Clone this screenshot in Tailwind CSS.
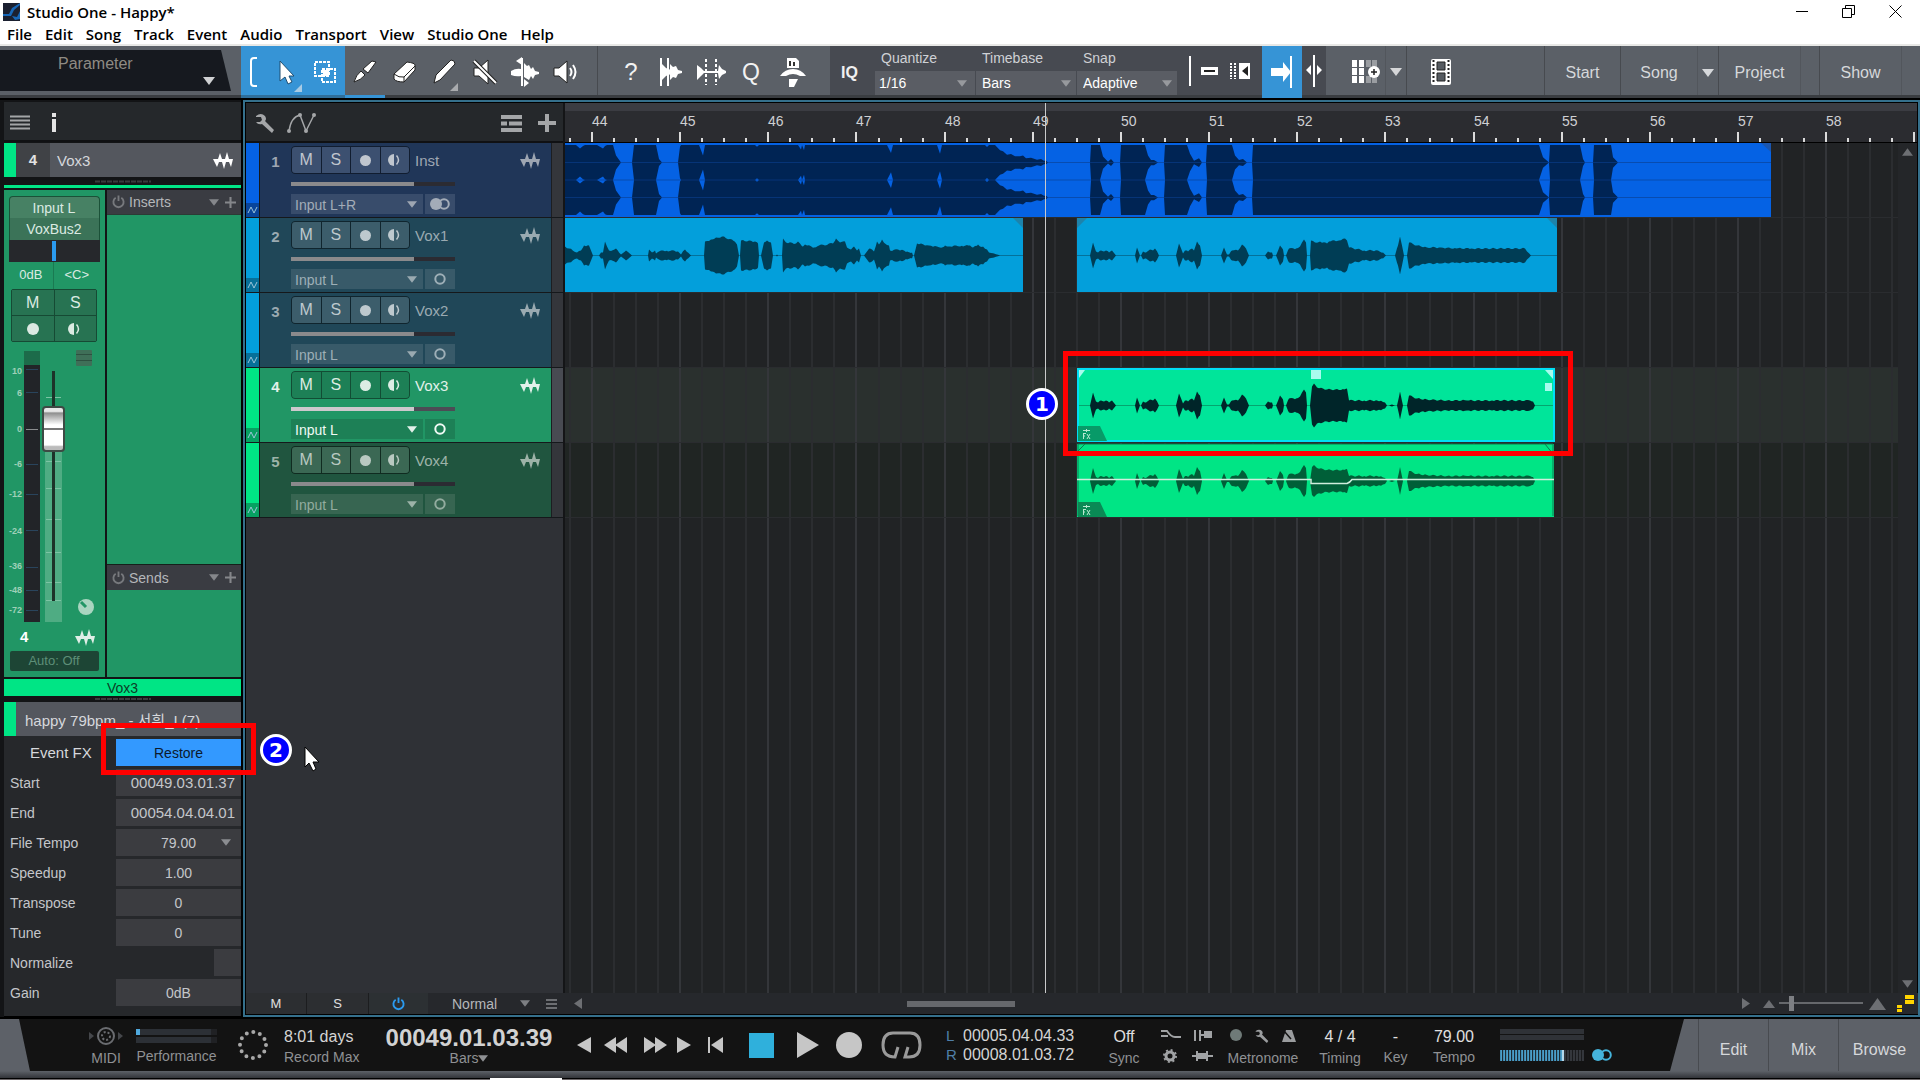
<!DOCTYPE html>
<html lang="en">
<head>
    <meta charset="UTF-8">
    <meta name="viewport" content="width=device-width, initial-scale=1.0">
    <title>Studio One - Happy*</title>
    <script src="https://cdn.jsdelivr.net/npm/@tailwindcss/browser@4"></script>
</head>
<body class="flex flex-col min-h-screen bg-black font-['Liberation_Sans','Noto_Sans_CJK_KR',sans-serif] text-[14px] leading-[18px] text-[#c4c6ca] overflow-x-hidden">

    <!-- shared icons -->
    <svg class="hidden">
      <symbol id="wave" viewBox="0 0 20 17"><path d="M0 7h5l2-6 2 6h3l2-7 2 7h4l-2 8-2-5h-3l-2 7-2-7h-3l-2 5z" fill="currentColor"/></symbol>
      <symbol id="down" viewBox="0 0 12 8"><path d="M0 0h12l-6 8z" fill="currentColor"/></symbol>
      <symbol id="monitor" viewBox="0 0 14 12"><path d="M6 0v12a6 6 0 0 1 0-12z" fill="currentColor"/><path d="M8.500 1.500q4 4.500 0 9" fill="none" stroke="currentColor" stroke-width="1.500"/></symbol>
      <symbol id="power" viewBox="0 0 14 14"><path d="M4 2.500a5.500 5.500 0 1 0 6 0M7 0v6" fill="none" stroke="currentColor" stroke-width="2"/></symbol>
      <symbol id="plus" viewBox="0 0 16 16"><path d="M6.500 0h3v6.500h6.500v3h-6.500v6.500h-3v-6.500h-6.500v-3h6.500z" fill="currentColor"/></symbol>
      <symbol id="wrench" viewBox="0 0 20 20"><path d="M1 3q5-4 9 0 2 3 0 5l9 9-2 3-10-9q-4 1-6-2l4 0 2-2-1-3-5 0z" fill="currentColor"/></symbol>
      <symbol id="stereo" viewBox="0 0 20 12"><circle cx="6" cy="6" r="6" fill="currentColor"/><circle cx="14" cy="6" r="4.800" fill="none" stroke="currentColor" stroke-width="2"/></symbol>
      <symbol id="mono" viewBox="0 0 12 12"><circle cx="6" cy="6" r="4.700" fill="none" stroke="currentColor" stroke-width="2"/></symbol>
    </svg>

    <!-- title bar -->
    <header class="bg-white text-black font-['Open_Sans','Noto_Sans',sans-serif] text-[15px] font-semibold h-[46px] border-b-2 border-[#e8e8e6]">
      <div class="flex items-center h-[23px] pl-[3px]">
        <svg class="w-[17px] h-[18px] mr-[7px]" viewBox="0 0 17 18"><rect width="17" height="18" fill="#1b2030"/><path d="M0 11h6l3-6 8-5v2l-6 5-3 6-8 0zM9 13l5 1 3-6v8l-5 1z" fill="#1767b8"/></svg>
        <h1 class="flex-1">Studio One - Happy*</h1>
        <button class="px-[17px]" aria-label="Minimize"><svg width="12" height="12" stroke="#000"><path d="M0 5.500h12"/></svg></button>
        <button class="px-[17px]" aria-label="Restore window"><svg width="13" height="13" stroke="#000" fill="none"><path d="M.5 3.500h9v9h-9zM3.500 3v-2.500h9v9h-3"/></svg></button>
        <button class="pl-[17px] pr-[18px]" aria-label="Close"><svg width="13" height="13" stroke="#000"><path d="M.5.5l12 12M12.500.5l-12 12"/></svg></button>
      </div>
      <nav class="flex items-center h-[22px] pl-[7px] gap-[13px]">
        <a href="#">File</a><a href="#">Edit</a><a href="#">Song</a><a href="#">Track</a><a href="#">Event</a><a href="#">Audio</a><a href="#">Transport</a><a href="#">View</a><a href="#">Studio One</a><a href="#">Help</a>
      </nav>
    </header>

    <!-- toolbar -->
    <div class="flex items-stretch h-[52px] bg-[#5b6067] border-b-3 border-[#3a3d41] text-[#f2f2f2] [&>button]:pt-[3px]">
      <div class="w-[241px] pt-1">
        <svg class="block" width="231" height="43" viewBox="0 0 231 43">
          <path d="M0 0h221l10 41h-231z" fill="#16191f"/>
          <text x="58" y="19" font-size="16" fill="#8f8b84">Parameter</text>
          <path d="M203 27h12l-6 8z" fill="#d0d1d3"/>
        </svg>
      </div>
      <div class="flex items-center bg-[#3694d6] w-[104px] -mb-[3px] border-b-3 border-[#2f6f9c] pt-[3px]">
        <svg class="mx-[8px]" width="9" height="30" viewBox="0 0 9 30"><path d="M8 1h-3q-3 0-3 3v22q0 3 3 3h3" fill="none" stroke="#fff" stroke-width="2"/></svg>
        <button class="w-[40px] flex" aria-label="Arrow tool"><svg width="40" height="44" viewBox="0 0 40 44"><path d="M14 11v20l5-4 3 7 4-2-3-6h5z" fill="#fff" stroke="#1f4f73"/><path d="M36 34v8h-8z" fill="#a9cbe4"/></svg></button>
        <button class="w-[38px]" aria-label="Range tool"><svg class="mx-auto" width="24" height="24" viewBox="0 0 24 24"><rect x="2" y="2" width="14" height="14" fill="none" stroke="#fff" stroke-width="2" stroke-dasharray="3 1"/><rect x="9" y="9" width="13" height="13" fill="none" stroke="#fff" stroke-width="2" stroke-dasharray="3 1"/><path d="M10 10h6v6h-6z" fill="#fff"/></svg></button>
      </div>
      <button class="w-[40px] -mb-[3px] border-b-3 border-[#3694d6]" aria-label="Split tool"><svg class="mx-auto" width="24" height="24" viewBox="0 0 24 24" stroke="#222"><path d="M1 22q2-7 7-11l4 4q-4 5-11 7zM10 9l9-8 4 1-8 11z" fill="#fff"/></svg></button>
      <button class="w-[40px]" aria-label="Eraser tool"><svg class="mx-auto" width="24" height="24" viewBox="0 0 24 24" stroke="#222"><path d="M1 14l13-12q8 1 8 3v5l-11 12q-8 0-10-3z" fill="#fff"/><path d="M1 14q5 4 10 3l11-11M11 17v5" fill="none"/></svg></button>
      <button class="w-[40px]" aria-label="Paint tool"><svg class="mx-auto" width="30" height="40" viewBox="0 0 30 40"><path d="M4 31l2-8 15-15q4 0 4 4l-15 16z" fill="#fff" stroke="#222"/><path d="M28 31v8h-8z" fill="#a9abae"/></svg></button>
      <button class="w-[40px]" aria-label="Mute tool"><svg class="mx-auto" width="26" height="26" viewBox="0 0 26 26" stroke="#222"><path d="M2 9h5l9-8v24l-9-8h-5z" fill="#fff"/><path d="M2 2l22 22" stroke-width="4"/><path d="M2 2l22 22" stroke="#fff" stroke-width="2"/></svg></button>
      <button class="w-[40px]" aria-label="Bend tool"><svg class="mx-auto" width="30" height="30" viewBox="0 0 30 30" fill="#fff"><path d="M12 1v28" stroke="#fff" stroke-width="2"/><path d="M12 0l-6 4 6 4zM14 22l5 4-5 4zM1 14q5-3 10-2v7q-5 1-10-1zM14 6l3 3 2-1 2 4 2-2 2 4 4 1v2l-4 1-2 4-2-3-2 4-5-3z"/></svg></button>
      <button class="w-[53px] border-r border-[#474a4f] pr-[11px]" aria-label="Listen tool"><svg class="mx-auto" width="26" height="24" viewBox="0 0 26 24"><path d="M1 8h5l8-7v22l-8-7h-5z" fill="#fff" stroke="#222"/><path d="M17 8q3 4 0 8M20 5q5 7 0 14" fill="none" stroke="#fff" stroke-width="2"/></svg></button>
      <div class="flex items-center w-[232px] pl-[13px] pt-[3px]">
        <button class="w-[40px] text-[24px]" aria-label="Help">?</button>
        <button class="w-[40px]" aria-label="Strip silence"><svg class="mx-auto" width="26" height="30" viewBox="0 0 26 30" fill="#fff"><path d="M3 1v28M10 1v28" stroke="#fff" stroke-width="2"/><path d="M4 7l4 4 5 2v4l-5 2-4 4zM12 7l3 3 3-1 2 4 4 1v2l-4 1-2 4-3-1-3 3z"/></svg></button>
        <button class="w-[40px]" aria-label="Transients"><svg class="mx-auto" width="30" height="28" viewBox="0 0 30 28" fill="#fff"><path d="M10 1v26M20 1v26" stroke="#fff" stroke-width="2" stroke-dasharray="3 2"/><path d="M1 7l4 3 3 3h14l1-6 3 4 4 2v2l-4 2-3 4-1-6h-14l-3 3-4 4z"/></svg></button>
        <button class="w-[40px] text-[23px]" aria-label="Quantize panel">Q</button>
        <button class="w-[44px]" aria-label="Action"><svg class="mx-auto" width="28" height="30" viewBox="0 0 28 30" fill="#fff"><path d="M8 1h9l3 3v7h-12z"/><path d="M10 4h2v5h-2zM14 5h2v4h-2z" fill="#333"/><path d="M1 19q5-7 13-7t13 7h-6q-7-4-14 0zM10 22h9l-4 8h-5z"/></svg></button>
      </div>
      <!-- quantize, timebase, snap -->
      <div class="flex items-stretch bg-[#474a51] text-[#cfd1d5]">
        <button class="w-[45px] text-[16px] font-bold text-[#f0f0f0] pt-[5px] pl-[3px] text-left indent-[8px]" aria-label="Input quantize">IQ</button>
        <div class="w-[101px] flex flex-col justify-between">
          <label for="quantize" class="pl-[6px] pt-[3px]">Quantize</label>
          <div class="relative"><select id="quantize" class="appearance-none w-[100px] h-[24px] pl-[4px] bg-[#5a5d64] text-white"><option>1/16</option></select><svg class="absolute right-[9px] top-[9px] w-[10px] h-[7px] text-[#97999d]"><use href="#down"/></svg></div>
        </div>
        <div class="w-[101px] flex flex-col justify-between">
          <label for="timebase" class="pl-[6px] pt-[3px]">Timebase</label>
          <div class="relative"><select id="timebase" class="appearance-none w-[100px] h-[24px] pl-[6px] bg-[#5a5d64] text-white"><option>Bars</option></select><svg class="absolute right-[6px] top-[9px] w-[10px] h-[7px] text-[#97999d]"><use href="#down"/></svg></div>
        </div>
        <div class="w-[101px] flex flex-col justify-between">
          <label for="snap" class="pl-[6px] pt-[3px]">Snap</label>
          <div class="relative"><select id="snap" class="appearance-none w-[100px] h-[24px] pl-[6px] bg-[#5a5d64] text-white"><option>Adaptive</option></select><svg class="absolute right-[6px] top-[9px] w-[10px] h-[7px] text-[#97999d]"><use href="#down"/></svg></div>
        </div>
        <div class="flex items-center w-[84px] pl-[11px] gap-[9px]">
          <svg width="2" height="30"><path d="M1 0v30" stroke="#fff" stroke-width="2"/></svg>
          <svg width="19" height="10"><rect x="1" y="1" width="17" height="8" fill="#fff"/><path d="M4 5h11" stroke="#222" stroke-width="2"/></svg>
          <svg width="23" height="18"><path d="M3 1v16M7 1v16" stroke="#fff" stroke-width="2" stroke-dasharray="2 1"/><rect x="11" y="1" width="11" height="16" fill="#fff"/><path d="M20 4v10l-6-5z" fill="#222"/></svg>
        </div>
        <button class="w-[40px] bg-[#3694d6] -mb-[3px]" aria-label="Autoscroll"><svg class="ml-[8px]" width="24" height="32" viewBox="0 0 24 32"><path d="M1 12h12v-6l8 10-8 10v-6h-12z" fill="#fff"/><path d="M21 0v32" stroke="#fff" stroke-width="2"/></svg></button>
        <button class="w-[24px]" aria-label="Cursor follows"><svg class="mx-auto" width="16" height="32" viewBox="0 0 16 32" fill="#fff"><path d="M8 0v32" stroke="#fff" stroke-width="2"/><path d="M5 10v10l-5-5zM11 10v10l5-5z"/></svg></button>
      </div>
      <button class="w-[60px] border-r border-[#52565c]" aria-label="Grid view"><svg class="ml-[26px]" width="29" height="24" viewBox="0 0 29 24"><path d="M0 0h5v7h-5zM7 0h5v7h-5zM0 8h5v7h-5zM7 8h5v7h-5zM0 16h5v7h-5zM7 16h5v7h-5z" fill="#fff"/><path d="M14 0h5v7h-5zM20 0h5v7h-5zM14 16h5v7h-5zM20 16h5v7h-5z" fill="#9a9da1"/><circle cx="22" cy="12" r="6" fill="#fff"/><path d="M19 12h6M22 9v6" stroke="#222" stroke-width="1.500"/></svg></button>
      <button class="w-[21px] border-r border-[#474a4f] flex items-center justify-center" aria-label="Grid options"><svg class="w-[12px] h-[8px] text-[#d5d6d8]"><use href="#down"/></svg></button>
      <button class="ml-[24px]" aria-label="Video"><svg width="20" height="26" viewBox="0 0 20 26"><rect width="20" height="26" rx="2" fill="#fff"/><path d="M6 3h8v8h-8zM6 14h8v8h-8z" fill="#555a60" stroke="#222"/><path d="M2.500 1v24M17.500 1v24" stroke="#222" stroke-width="2" stroke-dasharray="2 2"/></svg></button>
      <div class="flex-1"></div>
      <div class="flex text-[16px] text-[#d6d8db] [&>button]:pt-[4px]">
        <button class="w-[76px] border-l border-[#474a4f]">Start</button>
        <button class="w-[77px] border-l border-[#474a4f]">Song</button>
        <button class="w-[21px] border-l border-[#52565c] flex items-center justify-center" aria-label="Songs"><svg class="w-[12px] h-[8px]"><use href="#down"/></svg></button>
        <button class="w-[82px] border-l border-[#474a4f]">Project</button>
        <div class="w-[19px] border-l border-[#52565c]"></div>
        <button class="w-[82px] border-l border-[#474a4f]">Show</button>
        <div class="w-[19px] border-l border-[#52565c]"></div>
      </div>
    </div>

    <main class="flex flex-1 pt-[2px] pb-[2px] bg-black">
      <!-- inspector -->
      <aside class="relative w-[241px] shrink-0 pl-[4px] mr-[2px] bg-[#131416] flex flex-col">
        <div class="flex items-center h-[40px] mt-[2px] pt-[2px] pl-[6px] bg-[#25282b] border-b-2 border-[#101113]">
          <svg width="20" height="15" class="text-[#a4a6a8]"><path d="M0 1.500h20M0 5.500h20M0 9.500h20M0 13.500h20" stroke="currentColor" stroke-width="2"/></svg>
          <svg class="ml-[22px]" width="4" height="19"><path d="M0 0h4v4h-4zM0 6h4v13h-4z" fill="#e4e4e4"/></svg>
        </div>
        <div class="flex items-center h-[34px] mt-[1px] bg-[#54575e]">
          <span class="w-[12px] h-full bg-[#00e585]"></span>
          <span class="w-[34px] h-full bg-[#404246] flex items-center justify-center font-bold text-[15px] text-[#e2e2e2]">4</span>
          <span class="flex-1 pl-[7px] pt-px text-[15px] text-[#d6d8dc]">Vox3</span>
          <svg class="w-[20px] h-[17px] mr-[8px] text-white"><use href="#wave"/></svg>
        </div>
        <svg class="mx-auto" width="56" height="8"><path d="M0 4.500h56" stroke="#3a3b3d" stroke-width="2" stroke-dasharray="5 1"/></svg>
        <div class="h-[3px] bg-[#00e585] mb-[2px]"></div>

        <div class="flex h-[487px] gap-[2px]">
          <!-- channel strip -->
          <div class="w-[101px] bg-[#219665] flex flex-col items-center pr-px pt-[6px] text-[#dbeae2]">
            <button class="w-[91px] h-[22px] bg-[#478164] border border-b-0 border-[#1b5138] rounded-t-sm">Input L</button>
            <button class="w-[91px] h-[22px] bg-[#3b7358] border-x border-[#1b5138]">VoxBus2</button>
            <div class="w-[91px] h-[22px] bg-[#26282c] flex justify-center py-px"><span class="w-[4px] bg-[#2b9bf0]"></span></div>
            <div class="w-[91px] h-[27px] grid grid-cols-2 text-center text-[13px] leading-[26px]"><span class="border-r border-[#1a7a52]">0dB</span><span>&lt;C&gt;</span></div>
            <div class="w-[86px] h-[53px] grid grid-cols-2 grid-rows-2 gap-px bg-[#164a34] border border-[#164a34] rounded-xs text-[16px]">
              <button class="bg-[#277352]">M</button>
              <button class="bg-[#277352]">S</button>
              <button class="bg-[#277352] flex items-center justify-center" aria-label="Record arm"><span class="size-[12px] rounded-full bg-[#dbe9e2]"></span></button>
              <button class="bg-[#277352] flex items-center justify-center" aria-label="Monitor"><svg class="w-[14px] h-[12px]"><use href="#monitor"/></svg></button>
            </div>
            <div class="relative w-full h-[278px] mt-[8px]">
              <svg class="block" width="101" height="281" viewBox="0 0 101 281" font-size="9" font-weight="bold">
                <path d="M20 1h16v14h-16z" fill="#1c6b4a"/>
                <path d="M20 15h16v257h-16z" fill="#222428"/>
                <g stroke="#29445c" stroke-width="1"><path d="M22 19.500h12M22 42.500h12M22 114.500h12M22 144.500h12M22 180.500h12M22 217.500h12M22 240.500h12M22 260.500h12"/></g>
                <path d="M22 79.500h12" stroke="#8a8c8e"/>
                <g fill="#9fd0b8" text-anchor="end"><text x="18" y="24">10</text><text x="18" y="46">6</text><text x="18" y="82">0</text><text x="18" y="117">-6</text><text x="18" y="147">-12</text><text x="18" y="184">-24</text><text x="18" y="219">-36</text><text x="18" y="243">-48</text><text x="18" y="263">-72</text></g>
                <path d="M41 102h17v170h-17z" fill="#4fac83"/>
                <path d="M42 47.500h15M42 111.500h15M42 138.500h15M42 169.500h15M42 202.500h15M42 232.500h15M42 250.500h15" stroke="#7cc4a4"/>
                <path d="M48 21h3v230h-3z" fill="#1d3329"/>
                <rect x="72" y="0" width="16" height="16" rx="1" fill="#3f6f58"/><path d="M72 4.500h16M72 10.500h16" stroke="#2d5040"/>
                <circle cx="82" cy="257" r="8" fill="#a9d5c0"/><path d="M82 257l-5-5" stroke="#219665" stroke-width="3"/>
              </svg>
              <input type="range" value="83" aria-label="Channel volume" class="absolute left-[38px] top-[21px] w-[23px] h-[251px] appearance-none bg-transparent [writing-mode:vertical-lr] [direction:rtl] [&::-webkit-slider-thumb]:appearance-none [&::-webkit-slider-thumb]:w-[23px] [&::-webkit-slider-thumb]:h-[46px] [&::-webkit-slider-thumb]:rounded-sm [&::-webkit-slider-thumb]:border-2 [&::-webkit-slider-thumb]:border-[#3d4a44] [&::-webkit-slider-thumb]:bg-[linear-gradient(#e8e8e8_8%,#8f8f8f_12%,#fff_40%,#fff_48%,#777_48%,#777_52%,#fff_52%,#fff_88%,#bbb_92%)]">
            </div>
            <div class="flex w-full items-center justify-between pl-[16px] pr-[9px] text-[15px] font-bold text-white"><span>4</span><svg class="w-[20px] h-[17px] text-[#dfeee7]"><use href="#wave"/></svg></div>
            <button class="w-[89px] h-[20px] mt-[5px] bg-[#1d4535] rounded-xs text-[13px] text-[#5d8f78]">Auto: Off</button>
          </div>
          <div class="flex-1 flex flex-col bg-[#219665]">
            <div class="flex items-center h-[25px] px-[5px] bg-[#3a3c42] border-b border-[#2c3a35] text-[#b5b7ba]"><svg class="w-[13px] h-[14px] text-[#77797d] mr-[4px]"><use href="#power"/></svg><span class="flex-1">Inserts</span><svg class="w-[10px] h-[7px] text-[#85878b] mr-[6px]"><use href="#down"/></svg><svg class="w-[11px] h-[11px] text-[#85878b]" viewBox="0 0 16 16"><use href="#plus"/></svg></div>
            <div class="flex-1"></div>
            <div class="flex items-center h-[26px] px-[5px] bg-[#3a3c42] border-t border-[#15201b] text-[#b5b7ba]"><svg class="w-[13px] h-[14px] text-[#77797d] mr-[4px]"><use href="#power"/></svg><span class="flex-1">Sends</span><svg class="w-[10px] h-[7px] text-[#85878b] mr-[6px]"><use href="#down"/></svg><svg class="w-[11px] h-[11px] text-[#85878b]" viewBox="0 0 16 16"><use href="#plus"/></svg></div>
            <div class="h-[87px]"></div>
          </div>
        </div>
        <div class="h-[17px] mt-[2px] bg-[#00e585] text-center leading-[18px] text-[#0c3d27]">Vox3</div>
        <svg class="mx-auto" width="56" height="6"><path d="M0 3h56" stroke="#3a3b3d" stroke-width="2" stroke-dasharray="5 1"/></svg>

        <!-- event inspector -->
        <div class="flex items-center h-[34px] bg-[#54575e] text-[15px] text-[#d6d8dc]"><span class="w-[12px] h-full bg-[#00e585] mr-[9px]"></span><span class="pt-[3px]">happy 79bpm_ - 서휘_I (7)</span></div>
        <div class="flex-1 flex flex-col gap-[3px] bg-[#26282b] pt-[3px] pb-[8px] border-b border-black">
          <div class="flex h-[27px] items-center"><span class="flex-1 pl-[26px] text-[15px] text-[#d6d8dc]">Event FX</span><button class="w-[125px] h-full bg-[#3399ff] pt-px text-[#0c1a2c]">Restore</button></div>
          <div class="flex h-[27px] items-center"><label for="start" class="flex-1 pl-[6px]">Start</label><input id="start" value="00049.03.01.37" class="w-[125px] h-full bg-[#3b3c40] text-right pr-[6px] text-[15px]"></div>
          <div class="flex h-[27px] items-center"><label for="end" class="flex-1 pl-[6px]">End</label><input id="end" value="00054.04.04.01" class="w-[125px] h-full bg-[#3b3c40] text-right pr-[6px] text-[15px]"></div>
          <div class="relative flex h-[27px] items-center"><label for="ftempo" class="flex-1 pl-[6px]">File Tempo</label><input id="ftempo" value="79.00" class="w-[125px] h-full bg-[#3b3c40] text-center"><svg class="absolute right-[10px] top-[10px] w-[10px] h-[7px] text-[#8b8d91]"><use href="#down"/></svg></div>
          <div class="flex h-[27px] items-center"><label for="speedup" class="flex-1 pl-[6px]">Speedup</label><input id="speedup" value="1.00" class="w-[125px] h-full bg-[#3b3c40] text-center"></div>
          <div class="flex h-[27px] items-center"><label for="transpose" class="flex-1 pl-[6px]">Transpose</label><input id="transpose" value="0" class="w-[125px] h-full bg-[#3b3c40] text-center"></div>
          <div class="flex h-[27px] items-center"><label for="tune" class="flex-1 pl-[6px]">Tune</label><input id="tune" value="0" class="w-[125px] h-full bg-[#3b3c40] text-center"></div>
          <div class="flex h-[27px] items-center"><label for="normalize" class="flex-1 pl-[6px]">Normalize</label><input id="normalize" type="checkbox" class="appearance-none size-[27px] bg-[#3b3c40]"></div>
          <div class="flex h-[27px] items-center"><label for="gain" class="flex-1 pl-[6px]">Gain</label><input id="gain" value="0dB" class="w-[125px] h-full bg-[#3b3c40] text-center"></div>
        </div>

        <!-- callout 2 and mouse pointer -->
        <div class="absolute z-20 left-[101px] top-[623px] w-[155px] h-[52px] border-5 border-[#ff0000]"></div>
        <div class="absolute z-20 left-[260px] top-[634px] size-[32px] rounded-full border-3 border-white bg-[#0000ff] text-white font-bold text-[20px] leading-[26px] text-center font-['DejaVu_Sans',sans-serif]">2</div>
        <svg class="absolute z-20 left-[304px] top-[646px]" width="16" height="26" viewBox="0 0 16 26"><path d="M1 1v20l4-4 4 8 3-2-3-7h6z" fill="#fff" stroke="#000"/></svg>
      </aside>

      <!-- arrangement -->
      <section class="flex-1 min-w-0 flex flex-col border-2 border-[#35708c] bg-[#2f3136]">
        <div class="flex flex-1 border border-black border-b-0">
          <div class="w-[319px] shrink-0 flex flex-col border-r-2 border-[#141517]">
            <div class="flex items-center h-[40px] pt-[2px] bg-[#25282b] border-b-2 border-[#101113] px-[9px] text-[#a4a6a8]">
              <svg class="w-[20px] h-[20px] mr-[12px]"><use href="#wrench"/></svg>
              <svg width="29" height="21" viewBox="0 0 29 21" fill="currentColor"><path d="M2 18q2-14 11-16M13 2l6 16 8-16" fill="none" stroke="currentColor" stroke-width="1.500"/><circle cx="2" cy="18" r="2"/><circle cx="13" cy="2" r="2"/><circle cx="19" cy="18" r="2"/><circle cx="27" cy="2" r="2"/></svg>
              <span class="flex-1"></span>
              <svg class="mr-[16px]" width="21" height="17"><path d="M0 2h21M0 8.500h6M8 8.500h13M0 15h21" stroke="currentColor" stroke-width="4"/></svg>
              <svg class="-mr-[2px]" width="18" height="18"><path d="M9 0v18M0 9h18" stroke="currentColor" stroke-width="4"/></svg>
            </div>
            <div id="tracks" class="flex-1"></div>
          </div>
          <div class="relative flex-1 min-w-0 flex flex-col overflow-hidden">
            <svg id="ruler" class="block w-full h-[40px] bg-[#2b2c30] border-t-8 border-[#3b3c42] text-[#cfd0d3]" font-size="14"></svg>
            <div class="flex flex-1">
              <div class="relative flex-1 min-w-0 overflow-hidden bg-[#212325]">
                <svg id="lanes" class="absolute inset-0 w-full h-full"></svg>
              </div>
              <div class="w-[19px] flex flex-col items-center justify-between py-[5px] bg-[#242629] text-[#6d6f73]">
                <svg class="w-[11px] h-[8px] rotate-180"><use href="#down"/></svg>
                <svg class="w-[11px] h-[8px]"><use href="#down"/></svg>
              </div>
            </div>
            <div class="absolute left-[480px] top-0 bottom-0 w-px bg-[#c9cacb]"></div>
            <!-- callout 1 -->
            <div class="absolute left-[498px] top-[248px] w-[510px] h-[105px] border-5 border-[#ff0000]"></div>
            <div class="absolute left-[461px] top-[285px] size-[32px] rounded-full border-3 border-white bg-[#0000ff] text-white font-bold text-[20px] leading-[26px] text-center font-['DejaVu_Sans',sans-serif]">1</div>
          </div>
        </div>
        <div class="flex items-center h-[22px] bg-[#26282c] border-b border-l border-black text-[13px] text-[#e0e0e0]">
          <button class="w-[61px] h-full bg-[#2c2e31] border-r border-[#1c1d1f] pt-px">M</button>
          <button class="w-[62px] h-full bg-[#2c2e31] border-r border-[#1c1d1f] pt-px">S</button>
          <button class="w-[59px] h-full bg-[#2c3033] flex items-center justify-center text-[#2b9bf0]" aria-label="Track power"><svg class="w-[13px] h-[14px]"><use href="#power"/></svg></button>
          <select aria-label="Track height" class="appearance-none w-[92px] pl-[24px] pt-px text-[14px] text-[#b5b7ba]"><option>Normal</option></select>
          <svg class="w-[10px] h-[7px] text-[#7d7f83]"><use href="#down"/></svg>
          <svg class="ml-[16px] text-[#6d6f73]" width="11" height="12"><path d="M0 2h11M0 6h11M0 10h11" stroke="currentColor" stroke-width="2"/></svg>
          <svg class="ml-[17px] text-[#6d6f73]" width="8" height="11"><path d="M8 0v11l-8-5.500z" fill="currentColor"/></svg>
          <div class="flex-1 flex"><span class="ml-[28%] w-[108px] h-[6px] bg-[#66686c]"></span></div>
          <svg class="mr-[13px] text-[#6d6f73]" width="8" height="11"><path d="M0 0v11l8-5.500z" fill="currentColor"/></svg>
          <svg class="w-[12px] h-[8px] text-[#6d6f73] rotate-180 mr-[4px]"><use href="#down"/></svg>
          <input type="range" value="13" aria-label="Zoom" class="appearance-none w-[84px] h-[15px] bg-[linear-gradient(#26282c_6px,#66686c_6px,#66686c_8px,#26282c_8px)] [&::-webkit-slider-thumb]:appearance-none [&::-webkit-slider-thumb]:w-[5px] [&::-webkit-slider-thumb]:h-[15px] [&::-webkit-slider-thumb]:bg-[#7d7f83]">
          <svg class="ml-[6px] mr-[10px] text-[#6d6f73]" width="17" height="12"><path d="M0 12h17l-8.500-12z" fill="currentColor"/></svg>
          <svg class="mr-[4px]" width="18" height="17"><path d="M9 0h9v4h-9zM9 5h9v4h-9zM1 10h5v3h-5zM1 14h5v3h-5z" fill="#ffd400"/></svg>
        </div>
      </section>
    </main>

    <!-- transport -->
    <footer>
      <div class="flex h-[52px] bg-[#131313] text-center text-[#8f9194]">
        <svg width="30" height="52"><path d="M0 0h19l11 52h-30z" fill="#5d6168"/></svg>
        <div class="w-[60px] ml-[46px] flex flex-col items-center justify-between pt-[7px] pb-[4px]">
          <svg width="34" height="20" viewBox="0 0 34 20" class="text-[#6a6c70]"><circle cx="17" cy="10" r="8" fill="none" stroke="currentColor" stroke-width="2"/><circle cx="17" cy="10" r="4" fill="none" stroke="currentColor" stroke-width="2" stroke-dasharray="2 2"/><path d="M0 6l5 4-5 4zM29 6l5 4-5 4z" fill="#45474b"/></svg>
          <span>MIDI</span>
        </div>
        <div class="w-[81px] flex flex-col pt-[10px] gap-[2px]">
          <div class="h-[6px] bg-[#2c3036] border-r-6 border-[#202124]"><div class="w-[4px] h-full bg-[#4fa8dc]"></div></div>
          <div class="h-[6px] bg-[#2c3036] border-r-6 border-[#202124]"></div>
          <span class="mt-[2px]">Performance</span>
        </div>
        <svg class="ml-[21px] mr-[16px] mt-[10px]" width="30" height="32" viewBox="0 0 30 32"><circle cx="15" cy="16" r="13" fill="none" stroke="#a8a8a8" stroke-width="4" stroke-linecap="round" stroke-dasharray="0 6.800"/></svg>
        <div class="w-[101px] text-left flex flex-col justify-between pt-[9px] pb-[5px]"><span class="text-[16px] text-[#d5d5d5]">8:01 days</span><span>Record Max</span></div>
        <div class="w-[168px] flex flex-col items-center justify-between pt-[7px] pb-[5px]"><span class="text-[24px] leading-[24px] font-bold text-[#d2d2d2]">00049.01.03.39</span><button class="flex items-center leading-[16px]">Bars<svg class="w-[10px] h-[7px]"><use href="#down"/></svg></button></div>
        <div class="flex items-center ml-[24px] text-[#c6c6c6]">
          <button class="w-[27px]" aria-label="Previous"><svg width="14" height="16"><path d="M14 0v16l-14-8z" fill="currentColor"/></svg></button>
          <button class="w-[40px]" aria-label="Rewind"><svg width="23" height="16"><path d="M12 0v16l-12-8zM23 0v16l-12-8z" fill="currentColor"/></svg></button>
          <button class="w-[33px]" aria-label="Forward"><svg width="23" height="16"><path d="M0 0v16l12-8zM11 0v16l12-8z" fill="currentColor"/></svg></button>
          <button class="w-[31px]" aria-label="Next"><svg width="14" height="16"><path d="M0 0v16l14-8z" fill="currentColor"/></svg></button>
          <button class="w-[41px]" aria-label="Return to zero"><svg width="15" height="16"><path d="M0 0h2v16h-2zM15 0v16l-12-8z" fill="currentColor"/></svg></button>
          <button class="w-[48px]" aria-label="Stop"><span class="block size-[25px] bg-[#2fb0dc]"></span></button>
          <button class="w-[39px]" aria-label="Play"><svg width="22" height="26"><path d="M0 0v26l22-13z" fill="currentColor"/></svg></button>
          <button class="w-[45px]" aria-label="Record"><span class="block size-[26px] rounded-full bg-[#c6c6c6]"></span></button>
          <button class="w-[65px]" aria-label="Loop"><svg width="41" height="28" viewBox="0 0 41 28"><path d="M17 16l-3 10q-12 0-12-12t10-12h17q10 0 10 12t-11 12h-4l3-10" fill="none" stroke="#9a9a9a" stroke-width="3"/></svg></button>
        </div>
        <div class="w-[152px] grid grid-cols-[17px_1fr] text-left text-[16px] leading-[19px] py-[7px] text-[#d5d5d5]"><span class="text-[15px] text-[#4f7fa8]">L</span><span>00005.04.04.33</span><span class="text-[15px] text-[#4f7fa8]">R</span><span>00008.01.03.72</span></div>
        <div class="w-[52px] flex flex-col justify-between pt-[9px] pb-[4px]"><button class="text-[16px] text-[#e0e0e0]">Off</button><span>Sync</span></div>
        <svg class="ml-[11px] mt-[8px]" width="54" height="40" viewBox="0 0 54 40" fill="none" stroke="#a0a2a4" stroke-width="2"><path d="M0 4h6q4 6 8 6h6M0 9h7"/><path d="M34 3v11M39 3v11M39 8h5"/><path d="M43 4h8v7h-8z" fill="#a0a2a4" stroke="none"/><circle cx="9" cy="29" r="4" stroke-width="3"/><circle cx="9" cy="29" r="6" stroke-dasharray="2 2.700"/><path d="M31 29h5M46 29h6M36 24v10M46 24v10"/><path d="M37 26h8v6h-8z" fill="#a0a2a4" stroke="none"/></svg>
        <div class="w-[74px] ml-[11px] flex flex-col justify-between pt-[10px] pb-[4px]">
          <div class="flex justify-between px-[4px] text-[#9a9c9e]"><span class="size-[12px] rounded-full bg-[#6f7a78]"></span><svg class="w-[14px] h-[14px]"><use href="#wrench"/></svg><svg width="14" height="13"><path d="M4 1h6l4 12h-14z" fill="#9a9c9e"/><path d="M2 2l7 8" stroke="#131313" stroke-width="1.500"/></svg></div>
          <span>Metronome</span>
        </div>
        <div class="w-[62px] ml-[9px] flex flex-col justify-between pt-[9px] pb-[4px]"><span class="text-[16px] text-[#e0e0e0]">4 / 4</span><span>Timing</span></div>
        <div class="w-[49px] flex flex-col justify-between pt-[9px] pb-[5px]"><span class="text-[16px] text-[#e0e0e0]">-</span><span>Key</span></div>
        <div class="w-[68px] flex flex-col justify-between pt-[9px] pb-[5px]"><span class="text-[16px] text-[#e0e0e0]">79.00</span><span>Tempo</span></div>
        <div class="w-[114px] ml-[12px] pt-[10px] text-left">
          <div class="w-[84px] h-[5px] bg-[#2f3237] mb-px"></div>
          <div class="w-[84px] h-[5px] bg-[#2f3237]"></div>
          <div class="flex items-center gap-[8px] mt-[9px]">
            <div class="w-[84px] h-[11px] bg-[repeating-linear-gradient(to_right,#3c7fa3_0,#4fa8d4_2px,#1c2a33_2px,#1c2a33_3px)]"><div class="ml-auto w-[22px] h-full bg-[repeating-linear-gradient(to_right,#34373c_0,#34373c_2px,#1a1b1d_2px,#1a1b1d_3px)] border-l-2 border-[#b5d8ea]"></div></div>
            <svg class="w-[20px] h-[12px] text-[#45b4dc]"><use href="#stereo"/></svg>
          </div>
        </div>
        <div class="flex-1"></div>
        <svg width="15" height="52"><path d="M15 0h-1l-14 52h15z" fill="#5d6168"/></svg>
        <div class="flex text-[16px] text-[#d6d8db] bg-[#5d6168] pl-[13px] [&>button]:pt-[9px]">
          <button class="w-[70px] border-l border-[#484b50]">Edit</button>
          <button class="w-[70px] border-l border-[#484b50]">Mix</button>
          <button class="w-[82px] border-l border-[#484b50]">Browse</button>
        </div>
      </div>
      <div class="h-[7px] bg-linear-to-b from-[#5d6168] to-[#33353a]"></div>
      <div class="h-[2px] border-b border-[#6b6668] bg-black pl-[490px]"><div class="h-[2px] w-[72px] bg-white"></div></div>
    </footer>

    <script>
      const tracks = [
        { n: 1, name: 'Inst', input: 'Input L+R', io: 'stereo', body: 'bg-[#203658] text-[#9ea6b2]', btn: 'bg-[#3c5070] text-[#c0c6ce]', field: 'bg-[#384c6b] text-[#a3acb8]', edge: 'border-[#111d30]', gap: 'bg-[#111d30]', strip: 'bg-[#0562e4]', tab: 'bg-[#08459b]', end: 'bg-[#34363b]', vol: 'bg-[linear-gradient(to_right,#8a8a8c_75%,#2b2b32_75%)]' },
        { n: 2, name: 'Vox1', input: 'Input L', io: 'mono', body: 'bg-[#204758] text-[#9aaab1]', btn: 'bg-[#3c5d6b] text-[#bec9ce]', field: 'bg-[#385a69] text-[#9eafb7]', edge: 'border-[#10252e]', gap: 'bg-[#10252e]', strip: 'bg-[#039fdb]', tab: 'bg-[#077099]', end: 'bg-[#34363b]', vol: 'bg-[linear-gradient(to_right,#8a8a8c_75%,#2b2b32_75%)]' },
        { n: 3, name: 'Vox2', input: 'Input L', io: 'mono', body: 'bg-[#204758] text-[#9aaab1]', btn: 'bg-[#3c5d6b] text-[#bec9ce]', field: 'bg-[#385a69] text-[#9eafb7]', edge: 'border-[#10252e]', gap: 'bg-[#10252e]', strip: 'bg-[#039fdb]', tab: 'bg-[#077099]', end: 'bg-[#34363b]', vol: 'bg-[linear-gradient(to_right,#8a8a8c_75%,#2b2b32_75%)]' },
        { n: 4, name: 'Vox3', input: 'Input L', io: 'mono', body: 'bg-[#219665] text-[#e2f1ea]', btn: 'bg-[#1d8056] text-[#dcece4]', field: 'bg-[#1d8056] text-[#f0faf5]', edge: 'border-[#124d34]', gap: 'bg-[#124d34]', strip: 'bg-[#00e585]', tab: 'bg-[#07a062]', end: 'bg-[#484b52]', vol: 'bg-[linear-gradient(to_right,#cdc9cd_75%,#4c4c55_75%)]' },
        { n: 5, name: 'Vox4', input: 'Input L', io: 'mono', body: 'bg-[#20553f] text-[#9db3a8]', btn: 'bg-[#3b6854] text-[#b9c9c1]', field: 'bg-[#376551] text-[#93ac9f]', edge: 'border-[#102b20]', gap: 'bg-[#102b20]', strip: 'bg-[#00e585]', tab: 'bg-[#07a062]', end: 'bg-[#34363b]', vol: 'bg-[linear-gradient(to_right,#8a8a8c_75%,#2b2b32_75%)]' },
      ];
      document.getElementById('tracks').innerHTML = tracks.map(t => `
        <div class="flex h-[75px] border-b border-[#15181b] ${t.body}">
          <div class="w-[14px] flex flex-col border-r border-[#15181b] ${t.strip}">
            <span class="flex-1"></span>
            <span class="h-[14px] ${t.tab}"><svg width="13" height="14" fill="none" stroke="#9cc4d8"><path d="M2 10l3-6 3 6 3-6"/></svg></span>
          </div>
          <div class="w-[31px] pt-[10px] text-center text-[15px] font-bold">${t.n}</div>
          <div class="flex-1 pt-[3px]">
            <div class="flex items-center">
              <div class="grid grid-cols-4 gap-px w-[119px] h-[28px] border rounded-sm overflow-hidden text-[16px] ${t.edge} ${t.gap}">
                <button class="${t.btn}">M</button>
                <button class="${t.btn}">S</button>
                <button class="flex items-center justify-center ${t.btn}" aria-label="Record arm"><span class="size-[11px] rounded-full bg-current"></span></button>
                <button class="flex items-center justify-center ${t.btn}" aria-label="Monitor"><svg class="w-[14px] h-[12px]"><use href="#monitor"/></svg></button>
              </div>
              <span class="flex-1 pl-[5px] pt-[2px] text-[15px]">${t.name}</span>
              <svg class="w-[20px] h-[17px] mr-[11px]"><use href="#wave"/></svg>
            </div>
            <input type="range" value="75" aria-label="${t.name} volume" class="block appearance-none w-[164px] h-[4px] mt-[8px] [&::-webkit-slider-thumb]:appearance-none [&::-webkit-slider-thumb]:w-px ${t.vol}">
            <div class="flex gap-[2px] mt-[8px]">
              <div class="relative">
                <select aria-label="${t.name} input" class="appearance-none block w-[132px] h-[20px] pl-[4px] pt-px ${t.field}"><option>${t.input}</option></select>
                <svg class="absolute right-[6px] top-[7px] w-[10px] h-[7px]"><use href="#down"/></svg>
              </div>
              <button class="w-[30px] h-[20px] flex items-center justify-center ${t.field}" aria-label="Channel mode"><svg class="${t.io === 'stereo' ? 'w-[20px] h-[12px]' : 'w-[12px] h-[12px]'}"><use href="#${t.io}"/></svg></button>
            </div>
          </div>
          <div class="w-[12px] border-l border-[#1c1e21] ${t.end}"></div>
        </div>`).join('');

      // ruler and grid, 88.16 px per bar, bar 44 starts 27 px in
      const BAR = 88.16, FIRST = 27;
      let ruler = '', grid = '';
      for (let i = -1; i < 62; i++) {
        const x = Math.round(FIRST + i * BAR / 4), major = i % 4 === 0;
        ruler += `<path d="M${x} ${major ? 21 : 27}V32" stroke="#dadada" stroke-width="2"/>`;
        if (major && i < 60) ruler += `<text x="${x}" y="15" fill="currentColor">${44 + i / 4}</text>`;
        grid += `<path d="M${x} 0V2000" stroke="${major ? '#34363a' : '#2b2d30'}" stroke-width="2"/>`;
      }
      document.getElementById('ruler').innerHTML = ruler + '<path d="M0 31.500h2000" stroke="#000"/>';

      // waveform envelopes: x, half height
      const inst = '0,1 11,1 15,.8 18,.95 20,1 32,1 38,.8 40,.95 42,1 48,1 51,.4 56,0 67,0 69,1 91,1 94,.2 97,0 113,0 115,.9 116,1 134,1 138,.4 140,1 190,1 192,.9 194,1 233,1 236,.75 237,1 239,.7 240,1 322,1 326,.55 328,1 372,1 375,.5 377,1 420,1 422,.88 424,1 430,1 435,.7 438,.64 442,.45 446,.48 450,.36 455,.36 458,.4 461,.25 466,.27 472,.16 476,.2 479,.1 481,.1 483,0 525,0 526,1 535,1 538,.35 543,.05 546,.2 549,0 555,0 556,1 580,1 583,.4 586,.15 589,.15 593,0 599,0 600,1 622,1 625,.5 629,.1 634,.25 637,0 641,0 642,1 667,1 670,.4 674,.15 678,.2 682,0 687,0 688,1 974,1 978,.3 984,0 985,1 1015,1 1018,.2 1020,0 1028,0 1029,1 1046,1 1048,.3 1053,0';
      const vox1a = '0,9 4,7 12,3 16,5 19,10 24,10 28,0 34,0 36,3 38,3 40,14 42,9 44,5 47,5 51,7 54,3 56,1 61,5 67,0 83,0 84,6 87,3 90,5 91,2 94,4 98,5 103,4 109,5 114,3 116,1 120,6 123,3 126,0 139,0 140,14 147,16 157,19 168,15 172,11 174,0 175,0 176,15 190,14 193,12 194,0 196,0 199,13 202,15 206,13 208,0 211,0 212,1 213,0 217,0 218,17 221,13 231,12 233,14 238,9 240,11 249,8 252,9 256,11 260,10 264,12 268,12 271,17 275,13 280,14 282,8 286,6 289,9 292,5 294,7 296,0 299,0 302,4 305,7 309,4 312,14 314,11 317,16 320,12 324,10 325,5 333,6 342,4 347,3 348,0 349,0 352,12 364,10 372,9 377,8 380,10 385,9 391,10 398,9 403,10 408,8 413,11 415,9 418,9 422,6 424,3 429,2 435,0';
      const phrase = '13,0 16,13 19,4 21,3 24,5 27,4 29,5 32,3 35,5 39,0 58,0 60,8 63,0 64,0 66,4 69,3 73,6 76,5 78,7 82,0 99,0 102,12 106,2 108,5 111,4 115,7 117,5 120,14 123,10 125,0 144,0 147,8 150,1 152,1 155,5 161,5 165,11 169,7 172,0 188,0 191,4 195,3 196,0 199,0 203,10 206,6 207,0 209,0 212,7 219,7 223,9 227,16 229,13 230,0 ';
      const vox1b = phrase + '233,0 234,15 238,13 243,14 250,12 255,15 262,15 268,17 270,15 272,8 287,5 301,5 306,3 309,0 318,0 321,10 323,19 325,10 327,0 330,0 332,13 340,10 350,8 364,8 379,7 394,7 448,7 454,0';
      const tail = ' 272,5 287,5 300,5 308,3 310,0 312,0 315,1 318,0 320,0 323,14 326,0 330,0 332,10 340,7 350,6 370,5 390,5 415,5 453,5 456,4 458,0';
      const vox3 = phrase + '233,0 235,19 237,22 240,18 250,16 258,16 267,16 270,17' + tail;
      const vox4 = phrase + '233,0 235,14 237,16 240,13 250,11 258,11 267,11 270,12' + tail;

      // fill in between the points every 2 px, with a little ripple
      function ripple(pts) {
        const p = pts.trim().split(' ').map(s => s.split(',').map(Number)), out = [];
        p.forEach(([x, a], i) => {
          out.push([x, a]);
          const next = p[i + 1];
          if (!next) return;
          for (let s = x + 2; s < next[0]; s += 2) {
            const v = a + (next[1] - a) * (s - x) / (next[0] - x);
            out.push([s, v > 3 ? v + Math.sin(s * 2.3) * .7 : v]);
          }
        });
        return out.map(q => q.join(',')).join(' ');
      }
      function wave(pts, x0, y0, k, fill) {
        const p = pts.trim().split(' ').map(s => s.split(',').map(Number));
        const top = p.map(([x, a]) => `${x + x0},${y0 - a * k}`);
        const low = p.slice().reverse().map(([x, a]) => `${x + x0},${y0 + a * k}`);
        return `<polygon points="${top.concat(low).join(' ')}" fill="${fill}"/>`;
      }
      const fx = (y, fill) => `<path d="M513 ${y}h22l7 15h-29z" fill="${fill}"/><path d="M518 ${y + 4.5}h7M521.5 ${y + 3}v3M518.500 ${y + 7}v6M518 ${y + 7.5}h3M518 ${y + 10}h2M522 ${y + 8}l3 5M525 ${y + 8}l-3 5" stroke="#b8e8d0" fill="none"/>`;

      document.getElementById('lanes').innerHTML = `
        <rect y="225" width="100%" height="75" fill="#2a302e"/>
        <rect y="300" width="100%" height="75" fill="#202523"/>
        ${grid}
        <path d="M0 74.500h2000M0 149.500h2000M0 224.500h2000M0 299.500h2000M0 374.500h2000" stroke="#2a2c2f"/>
        <rect width="1206" height="74" fill="#0562e4"/>
        ${wave(inst, 0, 19.5, 17.5, '#002454')}${wave(inst, 0, 54.5, 17.5, '#002454')}
        <path d="M0 19.500h1206M0 37h1206M0 54.500h1206" stroke="#0a3f8f" opacity=".6"/>
        <path d="M1196 0h10v9z" fill="#1a56b0"/>
        <rect y="75" width="458" height="74" fill="#039fdb"/><path d="M0 112.500h458" stroke="#04719b"/>
        ${wave(ripple(vox1a), 0, 112.5, 1, '#003d55')}
        <path d="M448 75h10v10z" fill="#1d83ab"/>
        <rect x="512" y="75" width="480" height="74" fill="#039fdb"/><path d="M512 112.500h480" stroke="#04719b"/>
        ${wave(ripple(vox1b), 512, 112.5, 1, '#003d55')}
        <path d="M982 75h10v10zM512 75h10l-10 10z" fill="#1d83ab"/>
        <rect x="513" y="226" width="476" height="72" fill="#00e59a" stroke="#00dff5" stroke-width="2"/><path d="M514 262.500h474" stroke="#04a56f"/>
        ${wave(ripple(vox3), 512, 262.5, 1, '#002529')}
        <path d="M514 227h6l-6 8zM980 227h8v9zM746 227h10v9h-10zM980 240h7v8h-7z" fill="#a8fbee"/>
        ${fx(283, '#089a68')}
        <rect x="512" y="301" width="477" height="73" fill="#00e585"/>
        ${wave(ripple(vox4), 512, 338, 1, '#005f38')}
        <path d="M513 373v-72h475v72M513 308l7-7M980 301l8 10" fill="none" stroke="#0d7a50"/>
        <path d="M512 336.500h234v4h36q3-1 5-4h202" fill="none" stroke="#cfeedd" stroke-width="1.500"/>
        ${fx(359, '#0a8a55')}`;
    </script>
</body>
</html>
